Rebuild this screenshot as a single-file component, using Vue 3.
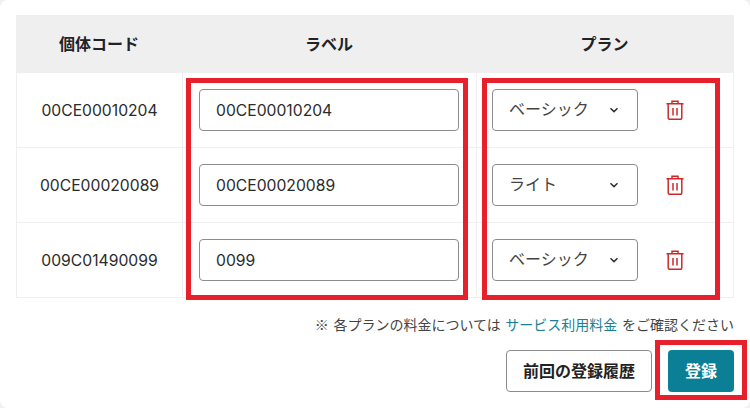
<template>
  <div class="panel">
    <div class="device-table">
      <div class="row head">
        <div class="cell col-code">個体コード</div>
        <div class="cell col-label">ラベル</div>
        <div class="cell col-plan">プラン</div>
      </div>
      <div v-for="d in devices" :key="d.code" class="row">
        <div class="cell col-code">{{ d.code }}</div>
        <div class="cell col-label">
          <input class="text-input" type="text" :value="d.label" />
        </div>
        <div class="cell col-plan">
          <div class="select">
            <span>{{ d.plan }}</span>
            <svg class="chevron" width="10" height="6" viewBox="0 0 10 6" fill="none">
              <path d="M1.5 1.2 5 4.6l3.5-3.4" stroke="#333" stroke-width="1.5" />
            </svg>
          </div>
          <svg class="trash" width="18" height="20" viewBox="0 0 18 20" fill="none" stroke="#cc2a2a" stroke-width="1.5">
            <path d="M0.5 3.8h17" />
            <path d="M6 3.8V1.2h6v2.6" />
            <path d="M2.2 3.8v14a1.5 1.5 0 0 0 1.5 1.5h10.6a1.5 1.5 0 0 0 1.5-1.5v-14" />
            <path d="M7 8v7.5M11 8v7.5" />
          </svg>
        </div>
      </div>
      <div class="mark mark-label"></div>
      <div class="mark mark-plan"></div>
    </div>

    <p class="note">※ 各プランの料金については <a class="link">サービス利用料金</a> をご確認ください</p>

    <div class="actions">
      <button class="btn btn-outline">前回の登録履歴</button>
      <div class="submit-wrap">
        <button class="btn btn-primary">登録</button>
        <div class="mark mark-submit"></div>
      </div>
    </div>
  </div>
</template>

<script setup>
const devices = [
  { code: '00CE00010204', label: '00CE00010204', plan: 'ベーシック' },
  { code: '00CE00020089', label: '00CE00020089', plan: 'ライト' },
  { code: '009C01490099', label: '0099', plan: 'ベーシック' }
]
</script>

<style>
html,
body {
  margin: 0;
  background: #f1f1f1;
}
</style>

<style scoped>
.panel {
  width: 750px;
  height: 408px;
  box-sizing: border-box;
  padding: 15px 16px 0;
  background: #fff;
  border-radius: 8px;
  font-family: Inter, "Noto Sans CJK JP", sans-serif;
  color: #2b2b2b;
  overflow: hidden;
}

.device-table {
  position: relative;
  border: 1px solid #efefef;
  border-top: 0;
  height: 283px;
  box-sizing: border-box;
}

.row {
  display: grid;
  grid-template-columns: 165px 294px 1fr;
  height: 75px;
  border-bottom: 1px solid #efefef;
  box-sizing: border-box;
}

.row:last-of-type {
  border-bottom: 0;
}

.row.head {
  height: 58px;
  margin: 0 -1px;
  grid-template-columns: 166px 294px 1fr;
  background: #efefef;
  border-bottom: 0;
  font-weight: 700;
  color: #1f2328;
}

.cell {
  display: flex;
  align-items: center;
  justify-content: center;
  font-size: 15.7px;
  box-sizing: border-box;
}

.head .cell {
  font-size: 16px;
  padding-bottom: 2px;
}

.col-label,
.col-plan {
  border-left: 1px solid #efefef;
}

.head .col-label,
.head .col-plan {
  border-left: 0;
}

.col-label {
  justify-content: flex-start;
  padding-left: 16px;
}

.head .col-label {
  justify-content: center;
  padding-left: 0;
}

.col-plan {
  justify-content: flex-start;
  padding-left: 15px;
  gap: 28px;
}

.head .col-plan {
  justify-content: center;
  padding-left: 0;
  padding-right: 1px;
}

.text-input {
  width: 260px;
  height: 42px;
  box-sizing: border-box;
  border: 1px solid #8c8c8c;
  border-radius: 4px;
  padding: 0 16px;
  font: inherit;
  color: #2b2b2b;
  outline: none;
}

.select {
  width: 146px;
  height: 42px;
  box-sizing: border-box;
  border: 1px solid #8c8c8c;
  border-radius: 4px;
  padding: 0 18px 4px 16px;
  display: flex;
  align-items: center;
  justify-content: space-between;
  font-size: 16px;
  color: #444;
}

.chevron {
  margin-top: 4px;
}

.trash {
  flex: none;
}

.mark {
  position: absolute;
  box-sizing: border-box;
  border: 5px solid #e8202c;
  pointer-events: none;
}

.mark-label {
  left: 169px;
  top: 63px;
  width: 282px;
  height: 222px;
}

.mark-plan {
  left: 465px;
  top: 63px;
  width: 238px;
  height: 222px;
}

.note {
  margin: 16px 0 0;
  text-align: right;
  font-family: "Noto Sans CJK JP", sans-serif;
  font-size: 14px;
  line-height: 20px;
  word-spacing: 1.5px;
  color: #444;
}

.link {
  color: #1a7f93;
}

.actions {
  display: flex;
  justify-content: flex-end;
  gap: 16px;
  margin-top: 16px;
}

.btn {
  height: 42px;
  box-sizing: border-box;
  border-radius: 4px;
  font-family: inherit;
  font-size: 16px;
  font-weight: 700;
  padding: 0 0 3px;
}

.btn-outline {
  width: 146px;
  background: #fff;
  border: 1px solid #8c8c8c;
  color: #222;
}

.btn-primary {
  width: 66px;
  background: #0b7f96;
  border: 0;
  color: #fff;
  display: block;
}

.submit-wrap {
  position: relative;
}

.mark-submit {
  left: -13px;
  top: -10px;
  width: 92px;
  height: 60px;
}
</style>
